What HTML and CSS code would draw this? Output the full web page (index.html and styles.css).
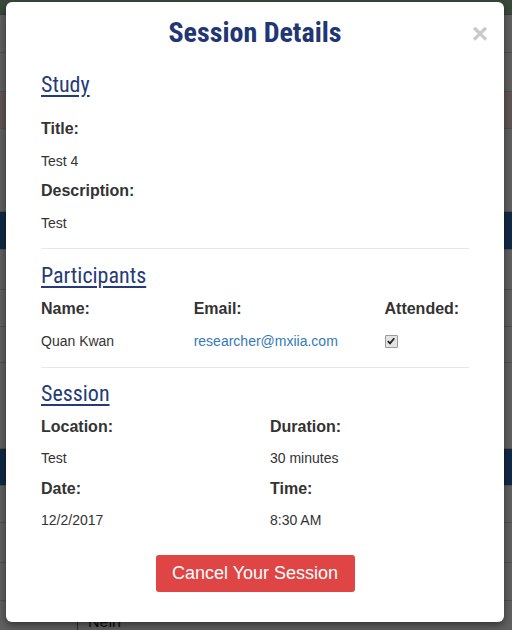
FILE: index.html
```html
<!DOCTYPE html>
<html lang="en">
<head>
<meta charset="utf-8">
<title>Session Details</title>
<link rel="stylesheet" href="styles.css">
</head>
<body>
<div class="page">
  <div class="row row-green"></div>
  <div class="row r38"></div>
  <div class="row r39"></div>
  <div class="row row-red r37"></div>
  <div class="row r83"></div>
  <div class="row row-blue r38"></div>
  <div class="row r40"></div>
  <div class="row r37"></div>
  <div class="row r36"></div>
  <div class="row r86"></div>
  <div class="row row-blue r37"></div>
  <div class="row r37"></div>
  <div class="row r40"></div>
  <div class="row r38"></div>
  <div class="row r38 last"><span class="cell-gap"></span><span class="cell-text">Nein</span></div>
</div>
<div class="backdrop"></div>
<div class="modal">
  <div class="modal-header">
    <h1 class="modal-title">Session Details</h1>
    <span class="close">&times;</span>
  </div>
  <div class="modal-body">
    <section class="study">
      <h2 class="section-title">Study</h2>
      <div class="label">Title:</div>
      <div class="value">Test 4</div>
      <div class="label">Description:</div>
      <div class="value">Test</div>
    </section>
    <hr class="divider">
    <section class="participants">
      <h2 class="section-title">Participants</h2>
      <div class="grid grid-3">
        <div class="col"><div class="label">Name:</div><div class="value">Quan Kwan</div></div>
        <div class="col"><div class="label">Email:</div><div class="value"><a class="link" href="#">researcher@mxiia.com</a></div></div>
        <div class="col"><div class="label">Attended:</div><div class="value"><span class="check"><svg width="8" height="8" viewBox="0 0 8 8"><path d="M0.8 4.2 L3 6.4 L7.3 1.2" fill="none" stroke="#222" stroke-width="1.8"/></svg></span></div></div>
      </div>
    </section>
    <hr class="divider divider-2">
    <section class="session">
      <h2 class="section-title">Session</h2>
      <div class="grid grid-2">
        <div class="col"><div class="label">Location:</div><div class="value">Test</div></div>
        <div class="col"><div class="label">Duration:</div><div class="value">30 minutes</div></div>
        <div class="col"><div class="label">Date:</div><div class="value">12/2/2017</div></div>
        <div class="col"><div class="label">Time:</div><div class="value">8:30 AM</div></div>
      </div>
    </section>
    <div class="actions">
      <button class="btn-danger" type="button">Cancel Your Session</button>
    </div>
  </div>
</div>
</body>
</html>
```
FILE: styles.css
```css
html, body {
  margin: 0;
  padding: 0;
}
body {
  width: 512px;
  height: 630px;
  overflow: hidden;
  position: relative;
  font-family: "Liberation Sans", Arial, sans-serif;
  color: #333;
  background: #ffffff;
}
.page {
  display: flex;
  flex-direction: column;
}
.row {
  border-bottom: 1px solid #c8c8c8;
  background: #f3f3f3;
  box-sizing: border-box;
}
.row-green { height: 15px; background: #8fb895; border-bottom: 1px solid #999; }
.row-red { background: #f2d8d8; }
.row-blue { background: #2f66b0; }
.r36 { height: 36px; }
.r37 { height: 37px; }
.r38 { height: 38px; }
.r39 { height: 39px; }
.r40 { height: 40px; }
.r83 { height: 83px; }
.r86 { height: 86px; }
.last {
  display: flex;
  border-bottom: none;
}
.cell-gap {
  width: 77px;
  border-right: 1px solid #777;
}
.cell-text {
  padding: 12px 0 0 10px;
  font-size: 16px;
  color: #222;
}
.backdrop {
  position: absolute;
  inset: 0;
  background: rgba(0, 0, 0, 0.6);
}
.modal {
  position: absolute;
  left: 6px;
  top: 2px;
  width: 498px;
  height: 620px;
  box-sizing: border-box;
  background: #fff;
  border-radius: 6px;
  box-shadow: 0 3px 9px rgba(0, 0, 0, 0.5);
}
.modal-header {
  position: relative;
  padding: 14px 35px 0;
}
.modal-title {
  margin: 0;
  text-align: center;
  font-family: "Roboto Condensed", Roboto, sans-serif;
  font-stretch: condensed;
  font-weight: 700;
  font-size: 28px;
  line-height: 34px;
  color: #223574;
}
.close {
  position: absolute;
  right: 16px;
  top: 14px;
  font-family: "Liberation Sans", Arial, sans-serif;
  font-weight: 700;
  font-size: 28px;
  line-height: 36px;
  color: #c9c9c9;
}
.modal-body {
  padding: 22px 35px 0;
}
.section-title {
  margin: 0;
  font-family: "Roboto Condensed", Roboto, sans-serif;
  font-stretch: condensed;
  font-weight: 400;
  font-size: 22px;
  line-height: 26px;
  color: #253a78;
  text-decoration: underline;
  text-decoration-thickness: 2px;
  text-underline-offset: 3px;
  display: inline-block;
}
.label {
  font-weight: 700;
  font-size: 16px;
  line-height: 20px;
  color: #333;
}
.value {
  font-size: 14px;
  line-height: 20px;
  color: #333;
}
.study .section-title { margin-bottom: 21px; }
.study .label { margin-bottom: 12px; }
.study .value { margin-bottom: 10px; }
.study .value:last-child { margin-bottom: 0; }
.divider {
  margin: 15px 0 0;
  border: 0;
  border-top: 1px solid #e8e8e8;
  height: 0;
}
.participants { padding-top: 14px; }
.session { padding-top: 13px; }
.participants .section-title, .session .section-title { display: block; width: max-content; margin-bottom: 10px; }
.grid {
  display: grid;
  margin: 0 -15px;
}
.grid-3 { grid-template-columns: 4fr 5fr 3fr; }
.grid-2 { grid-template-columns: 1fr 1fr; }
.col { padding: 0 15px; }
.col .label { margin-bottom: 12px; }
.grid-2 .col .label { margin-bottom: 11px; }
.grid-2 .col .value { margin-bottom: 11px; }
.divider-2 { margin-top: 16px; }
.link {
  color: #337ab7;
  text-decoration: none;
}
.check {
  display: inline-flex;
  align-items: center;
  justify-content: center;
  width: 11px;
  height: 11px;
  border: 1px solid #9a9a9a;
  border-radius: 1px;
  background: #e4e4e4;
  vertical-align: 1px;
}
.actions {
  display: flex;
  justify-content: center;
  padding-top: 14px;
}
.btn-danger {
  width: 199px;
  height: 37px;
  border: 0;
  border-radius: 3px;
  background: #df4545;
  color: #fff;
  font-family: "Liberation Sans", Arial, sans-serif;
  font-size: 18px;
  padding: 0;
}
```
